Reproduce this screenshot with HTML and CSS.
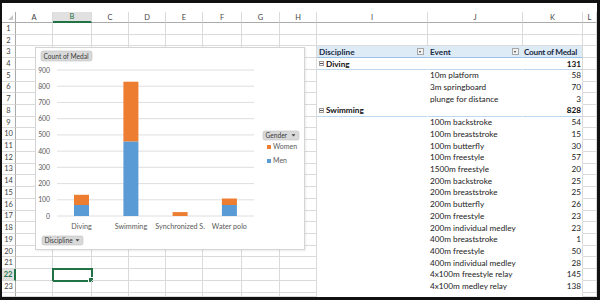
FILE: index.html
```html
<!DOCTYPE html>
<html lang="en">
<head>
    <meta charset="UTF-8">
    <title>Medals</title>
    <link rel="stylesheet" href="styles.css">
</head>
<body>
    <div class="frame">
        <div class="sheet" id="sheet"></div>
        <div class="chart">
            <svg width="268" height="201" viewBox="0 0 268 201">
                <rect class="pill" x="5" y="3" width="51" height="10" rx="2"/>
                <text class="pilltext" x="7.5" y="10.7">Count of Medal</text>

                <g class="grid">
                    <line x1="21" y1="22" x2="218" y2="22"/>
                    <line x1="21" y1="38.2" x2="218" y2="38.2"/>
                    <line x1="21" y1="54.4" x2="218" y2="54.4"/>
                    <line x1="21" y1="70.7" x2="218" y2="70.7"/>
                    <line x1="21" y1="86.9" x2="218" y2="86.9"/>
                    <line x1="21" y1="103.1" x2="218" y2="103.1"/>
                    <line x1="21" y1="119.3" x2="218" y2="119.3"/>
                    <line x1="21" y1="135.6" x2="218" y2="135.6"/>
                    <line x1="21" y1="151.8" x2="218" y2="151.8"/>
                    <line x1="21" y1="168" x2="218" y2="168"/>
                </g>
                <g class="ylabels">
                    <text x="14" y="24.5">900</text>
                    <text x="14" y="40.7">800</text>
                    <text x="14" y="56.9">700</text>
                    <text x="14" y="73.2">600</text>
                    <text x="14" y="89.4">500</text>
                    <text x="14" y="105.6">400</text>
                    <text x="14" y="121.8">300</text>
                    <text x="14" y="138.1">200</text>
                    <text x="14" y="154.3">100</text>
                    <text x="14" y="170.5">0</text>
                </g>

                <!-- men / women stacks -->
                <rect class="men" x="38" y="157" width="15" height="11"/>
                <rect class="women" x="38" y="146.8" width="15" height="10.2"/>
                <rect class="men" x="87.4" y="93.4" width="15" height="74.6"/>
                <rect class="women" x="87.4" y="33.7" width="15" height="59.7"/>
                <rect class="women" x="136.6" y="164.1" width="15" height="3.9"/>
                <rect class="men" x="185.9" y="157" width="15" height="11"/>
                <rect class="women" x="185.9" y="150.5" width="15" height="6.5"/>

                <g class="xlabels">
                    <text x="45.5" y="180.5">Diving</text>
                    <text x="94.9" y="180.5">Swimming</text>
                    <text x="144.1" y="180.5">Synchronized S.</text>
                    <text x="193.4" y="180.5">Water polo</text>
                </g>

                <rect class="pill" x="6" y="188" width="41" height="9" rx="2"/>
                <text class="pilltext" x="8.5" y="195">Discipline</text>
                <path class="arrow" d="M39.5 191.3 h4 l-2 2.3 z"/>

                <rect class="pill" x="227" y="83" width="36" height="9" rx="2"/>
                <text class="pilltext" x="229.5" y="90">Gender</text>
                <path class="arrow" d="M255.5 86.3 h4 l-2 2.3 z"/>

                <rect class="women" x="231" y="97" width="4" height="4"/>
                <text class="legend" x="237" y="101.2">Women</text>
                <rect class="men" x="231" y="111" width="4" height="4"/>
                <text class="legend" x="237" y="115.2">Men</text>
            </svg>
        </div>
    </div>
    <script src="script.js"></script>
</body>
</html>
```

FILE: styles.css
```css
body, html {
    margin: 0;
    padding: 0;
    background: #ffffff;
    font-family: Lato, "Liberation Sans", sans-serif;
}
.frame {
    position: relative;
    width: 595px;
    height: 294px;
    border: solid #111111;
    border-width: 3px 3px 3px 2px;
    overflow: hidden;
}
.sheet {
    display: grid;
    grid-template-columns: 14px 37px 39px 37px 37px 37px 39px 38px 37px 111px 95px 60px 14px;
    grid-template-rows: 9px 11px repeat(23, 11.73px) 1fr;
    height: 100%;
    font-size: 8.2px;
    color: #222222;
}
.sheet div {
    box-sizing: border-box;
    min-width: 0;
    white-space: nowrap;
}
.gap {
    grid-column: 1 / -1;
}
.corner {
    position: relative;
    border-right: 1px solid #ababab;
    border-bottom: 1px solid #ababab;
}
.corner::after {
    content: "";
    position: absolute;
    right: 2px;
    bottom: 2px;
    border-style: solid;
    border-width: 0 0 5px 5px;
    border-color: transparent transparent #c6c6c6 transparent;
}
.colhead {
    display: flex;
    justify-content: center;
    align-items: center;
    font-size: 7.5px;
    color: #444444;
    border-right: 1px solid #dadada;
    border-bottom: 1px solid #ababab;
}
.colhead.active {
    background: #e1e1e1;
    color: #217346;
    border-bottom: 2px solid #217346;
}
.rowhead {
    display: flex;
    justify-content: center;
    align-items: center;
    font-size: 7.5px;
    color: #444444;
    border-right: 1px solid #ababab;
    border-bottom: 1px solid #dadada;
}
.rowhead.active {
    background: #e1e1e1;
    color: #217346;
    font-weight: bold;
    border-right: 2px solid #217346;
}
.cell {
    position: relative;
    display: flex;
    align-items: center;
    padding: 0 2px;
    border-right: 1px solid #dadada;
    border-bottom: 1px solid #dadada;
}
.cell.sel {
    outline: 2px solid #217346;
    outline-offset: -1px;
}
.cell.sel::after {
    content: "";
    position: absolute;
    right: -3px;
    bottom: -3px;
    width: 4px;
    height: 4px;
    background: #217346;
    border: 1px solid #ffffff;
}
.pv {
    background: #ffffff;
    border-color: transparent;
}
.pv.last {
    border-right-color: #dadada;
}
.pv.num {
    justify-content: flex-end;
    padding-right: 1px;
}
.pv.head {
    background: #ddebf7;
    border-bottom-color: #9bc2e6;
    font-weight: bold;
    color: #1a2a44;
    justify-content: space-between;
    padding-right: 3px;
}
.pv.head.last {
    justify-content: flex-start;
    padding: 0 1px;
    letter-spacing: -0.25px;
}
.pv.sub {
    border-bottom-color: #bdd7ee;
    font-weight: bold;
    color: #111111;
}
.drop {
    position: relative;
    width: 7px;
    height: 7px;
    box-sizing: border-box;
    background: #f2f2f2;
    border: 1px solid #a6a6a6;
}
.drop::after {
    content: "";
    position: absolute;
    left: 1px;
    top: 2px;
    border-style: solid;
    border-width: 2px 1.5px 0 1.5px;
    border-color: #333333 transparent transparent transparent;
}
.toggle {
    position: relative;
    width: 5px;
    height: 5px;
    margin-right: 2px;
    box-sizing: border-box;
    border: 1px solid #9a9a9a;
}
.toggle::after {
    content: "";
    position: absolute;
    left: 0;
    top: 1px;
    width: 3px;
    height: 1px;
    background: #555555;
}
.chart {
    position: absolute;
    left: 33px;
    top: 44px;
    width: 270px;
    height: 203px;
    box-sizing: border-box;
    background: #ffffff;
    border: 1px solid #d4d4d4;
    box-shadow: 1px 1px 2px rgba(0, 0, 0, 0.08);
}
.chart svg {
    display: block;
    font-family: Lato, "Liberation Sans", sans-serif;
}
.grid line {
    stroke: #dedede;
    stroke-width: 1;
}
.ylabels text {
    font-size: 6.8px;
    fill: #595959;
    text-anchor: end;
}
.xlabels text {
    font-size: 7.2px;
    fill: #595959;
    text-anchor: middle;
}
.men {
    fill: #5b9bd5;
}
.women {
    fill: #ed7d31;
}
.pill {
    fill: #d9d9d9;
    stroke: #bfbfbf;
    stroke-width: 0.6;
}
.pilltext {
    font-size: 6.6px;
    fill: #3a3a3a;
}
.arrow {
    fill: #404040;
}
.legend {
    font-size: 7px;
    fill: #595959;
}
```

FILE: script.js
```js
const cols = ['A', 'B', 'C', 'D', 'E', 'F', 'G', 'H', 'I', 'J', 'K', 'L'];

// pivot table rows, keyed by sheet row
const pivot = {
    4: ['Diving', '', 131],
    5: ['', '10m platform', 58],
    6: ['', '3m springboard', 70],
    7: ['', 'plunge for distance', 3],
    8: ['Swimming', '', 828],
    9: ['', '100m backstroke', 54],
    10: ['', '100m breaststroke', 15],
    11: ['', '100m butterfly', 30],
    12: ['', '100m freestyle', 57],
    13: ['', '1500m freestyle', 20],
    14: ['', '200m backstroke', 25],
    15: ['', '200m breaststroke', 25],
    16: ['', '200m butterfly', 26],
    17: ['', '200m freestyle', 23],
    18: ['', '200m individual medley', 23],
    19: ['', '400m breaststroke', 1],
    20: ['', '400m freestyle', 50],
    21: ['', '400m individual medley', 28],
    22: ['', '4x100m freestyle relay', 145],
    23: ['', '4x100m medley relay', 138],
    24: ['', '', '']
};

const sheet = document.getElementById('sheet');

function add(cls, text) {
    const d = document.createElement('div');
    d.className = cls;
    if (text !== undefined && text !== '') d.textContent = text;
    sheet.appendChild(d);
    return d;
}

function span(cls) {
    const s = document.createElement('span');
    s.className = cls;
    return s;
}

add('gap');
add('corner');
cols.forEach(c => add(c == 'B' ? 'colhead active' : 'colhead', c));

for (let r = 1; r <= 24; r++) {
    add(r == 22 ? 'rowhead active' : 'rowhead', r <= 23 ? r : '');
    cols.forEach(c => {
        let cls = 'cell';
        if (r == 22 && c == 'B') cls += ' sel';
        const inPivot = r >= 3 && (c == 'I' || c == 'J' || c == 'K');
        if (!inPivot) {
            add(cls);
            return;
        }
        cls += ' pv';
        if (c == 'K') cls += ' last num';
        if (r == 3) {
            const d = add(cls + ' head');
            if (c == 'I') d.append('Discipline', span('drop'));
            if (c == 'J') d.append('Event', span('drop'));
            if (c == 'K') d.textContent = 'Count of Medal';
            return;
        }
        const row = pivot[r];
        if (row[0]) cls += ' sub';
        const d = add(cls);
        if (c == 'I' && row[0]) d.append(span('toggle'), row[0]);
        if (c == 'J') d.textContent = row[1];
        if (c == 'K') d.textContent = row[2];
    });
}
```
